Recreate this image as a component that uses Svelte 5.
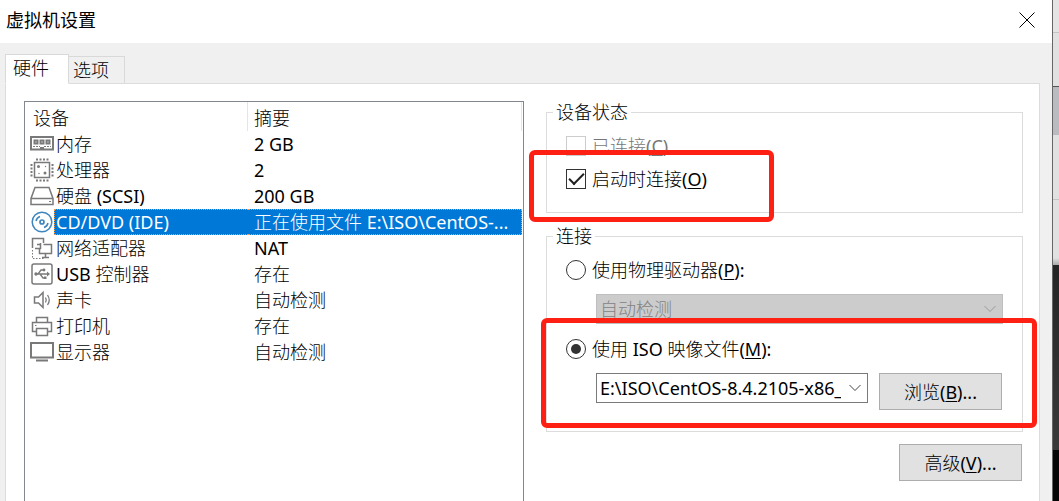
<script>
	let devices = [
		{ icon: 'memory', name: '内存', summary: '2 GB' },
		{ icon: 'cpu', name: '处理器', summary: '2' },
		{ icon: 'disk', name: '硬盘 (SCSI)', summary: '200 GB' },
		{ icon: 'cd', name: 'CD/DVD (IDE)', summary: '正在使用文件 E:\\ISO\\CentOS-...' },
		{ icon: 'network', name: '网络适配器', summary: 'NAT' },
		{ icon: 'usb', name: 'USB 控制器', summary: '存在' },
		{ icon: 'sound', name: '声卡', summary: '自动检测' },
		{ icon: 'printer', name: '打印机', summary: '存在' },
		{ icon: 'display', name: '显示器', summary: '自动检测' }
	]

	let selected = $state(3)
	let connected = $state(false)
	let connectAtPowerOn = $state(true)
	let source = $state('iso')

	// latin runs are set heavier than the thin chinese face
	function runs(text) {
		return text.split(/([ -~]+)/).filter((t) => t !== '')
	}
</script>

{#snippet mixed(text)}{#each runs(text) as t}<span class:latin={/^[ -~]/.test(t)}>{t}</span>{/each}{/snippet}

{#snippet key(letter, tail = '')}<span class="latin">(<u>{letter}</u>){tail}</span>{/snippet}

{#snippet icon(name)}
	<svg class="icon" class:blue={name === 'cd'} viewBox="0 0 24 24" aria-hidden="true">
		{#if name === 'memory'}
			<path d="M1 5H23V17.500H13V16H11V17.500H1Z" stroke-width="2" />
			<path d="M4.500 8.500h3v3h-3zM10.500 8.500h3v3h-3zM16.500 8.500h3v3h-3z" stroke-width="2" />
			<path d="M3 14.500H10M14 14.500H21" stroke-dasharray="2 1" />
		{:else if name === 'cpu'}
			<rect x="4.500" y="4.500" width="15" height="15" stroke-width="1.500" />
			<path d="M6 1.500H19M6 22.500H19" stroke-width="2" stroke-dasharray="2 1.500" />
			<path d="M1.500 6V19M22.500 6V19" stroke-width="2" stroke-dasharray="2 1.500" />
			<circle class="fill" cx="8.500" cy="8.500" r="1.500" />
			<circle class="fill" cx="15" cy="15" r="1.500" />
			<circle class="fill" cx="9" cy="15.500" r="0.700" />
			<circle class="fill" cx="15.500" cy="8.500" r="0.700" />
		{:else if name === 'disk'}
			<path d="M5 3.500H19L23 14.500V20.500H1V14.500ZM1 14.500H23" stroke-width="1.500" />
			<path d="M19 17.500h2" />
		{:else if name === 'cd'}
			<circle cx="12" cy="12" r="9.800" stroke-width="1.500" />
			<circle cx="12" cy="12" r="2" stroke-width="1.700" />
			<path d="M6 11A6 6 0 0 1 10 6.500M18 13A6 6 0 0 1 14 17.500" stroke-width="1.500" />
		{:else if name === 'network'}
			<path d="M2.500 12V2.500H13.500V7" stroke-width="1.500" />
			<path d="M13.500 8.500H21.500V17.500H9.500V12" stroke-width="1.500" />
			<path d="M5 12.500H10.500V7M7 8.500H10.500" stroke-width="1.500" />
			<path d="M15.500 18V21M12 21.500H19" stroke-width="1.500" />
			<path d="M2.500 14V22M3 22.500H14" stroke-dasharray="1.500 1.500" />
		{:else if name === 'usb'}
			<rect x="2" y="2" width="20" height="20" rx="2" stroke-width="1.500" />
			<path d="M5 12H18M8 12 11 8H14M10 12 13 16H15" stroke-width="1.300" />
			<path class="fill" d="M17 9.500 20 12 17 14.500Z" />
			<circle class="fill" cx="6" cy="12" r="1.700" />
			<circle class="fill" cx="14" cy="8" r="1.400" />
			<path class="fill" d="M14 14.500h2.500v2.500h-2.500z" />
		{:else if name === 'sound'}
			<path d="M4.500 9H8.500L13 4.500V19.500L8.500 15H4.500Z" stroke-width="1.500" />
			<path d="M15.500 9.500Q17 12 15.500 14.500M17.500 7Q21 12 17.500 17" stroke-width="1.300" />
		{:else if name === 'printer'}
			<path d="M6.500 8V3.500H17.500V8M6.500 17.500H2.500V8.500H21.500V17.500H17.500M6.500 14.500H17.500V21.500H6.500Z" stroke-width="1.500" />
			<path d="M5 11.500h1.500" />
		{:else}
			<path d="M1 3H23V17.500H1Z" stroke-width="2" />
			<path d="M6 20.500H18" stroke-width="2" />
		{/if}
	</svg>
{/snippet}

<div class="screen">
	<main class="dialog">
		<header>
			<h1>虚拟机设置</h1>
			<button class="close" aria-label="关闭">
				<svg viewBox="0 0 16 16"><path d="M.5.5 15.500 15.500M15.500.5.5 15.500" /></svg>
			</button>
		</header>

		<div class="body">
			<div class="tabs" role="tablist">
				<button class="tab active" role="tab" aria-selected="true">硬件</button>
				<button class="tab" role="tab" aria-selected="false">选项</button>
			</div>

			<div class="panel" role="tabpanel">
				<div class="list">
					<table>
						<colgroup>
							<col class="c-icon" />
							<col class="c-name" />
							<col />
						</colgroup>
						<thead>
							<tr>
								<th colspan="2">设备</th>
								<th>摘要</th>
							</tr>
						</thead>
						<tbody>
							{#each devices as d, i}
								<tr class:selected={selected === i} onclick={() => (selected = i)}>
									<td class="pic">{@render icon(d.icon)}</td>
									<td class="name">{@render mixed(d.name)}</td>
									<td class="summary">{@render mixed(d.summary)}</td>
								</tr>
							{/each}
						</tbody>
					</table>
				</div>

				<div class="settings">
					<fieldset class="status">
						<legend>设备状态</legend>
						<label class="row disabled">
							<input type="checkbox" bind:checked={connected} disabled />
							<span>已连接{@render key('C')}</span>
						</label>
						<label class="row">
							<input type="checkbox" bind:checked={connectAtPowerOn} />
							<span>启动时连接{@render key('O')}</span>
						</label>
						<div class="mark mark-status"></div>
					</fieldset>

					<fieldset class="connection">
						<legend>连接</legend>
						<label class="row">
							<input type="radio" name="source" value="physical" bind:group={source} />
							<span>使用物理驱动器{@render key('P', ':')}</span>
						</label>
						<div class="combo off">
							<select aria-label="物理驱动器" disabled>
								<option>自动检测</option>
							</select>
							<svg viewBox="0 0 12 8"><path d="M.5 1 6 6.500 11.500 1" /></svg>
						</div>
						<label class="row second">
							<input type="radio" name="source" value="iso" bind:group={source} />
							<span>{@render mixed('使用 ISO 映像文件')}{@render key('M', ':')}</span>
						</label>
						<div class="file">
							<div class="combo">
								<select class="latin" aria-label="ISO 映像文件">
									<option>E:\ISO\CentOS-8.4.2105-x86_</option>
								</select>
								<svg viewBox="0 0 12 8"><path d="M.5 1 6 6.500 11.500 1" /></svg>
							</div>
							<button class="push">浏览{@render key('B', '...')}</button>
						</div>
						<div class="mark mark-iso"></div>
					</fieldset>

					<button class="push advanced">高级{@render key('V', '...')}</button>
				</div>
			</div>
		</div>
	</main>
	<div class="backdrop"></div>
</div>

<style>
	:global(body) {
		margin: 0;
		overflow: hidden;
	}

	.screen, .screen * {
		box-sizing: border-box;
	}

	.screen {
		display: flex;
		height: 100vh;
		font: 300 18px/24px "Noto Sans", "Noto Sans CJK SC", sans-serif;
		color: #000;
	}

	button, select {
		font: inherit;
		color: inherit;
	}

	.latin {
		font-weight: 400;
	}

	.dialog {
		flex: 1;
		min-width: 0;
		display: flex;
		flex-direction: column;
		background: #f0f0f0;
	}

	header {
		display: flex;
		align-items: center;
		justify-content: space-between;
		height: 43px;
		padding: 0 17px 3px 6px;
		background: #fff;
	}

	h1 {
		margin: 0;
		font-size: 18px;
		font-weight: 400;
	}

	.close {
		display: flex;
		padding: 0;
		border: 0;
		background: none;
	}

	.close svg {
		width: 16px;
		height: 16px;
		fill: none;
		stroke: #000;
	}

	.body {
		flex: 1;
		display: flex;
		flex-direction: column;
		min-height: 0;
		padding: 11px 12px 0 5px;
	}

	.tabs {
		display: flex;
		align-items: flex-end;
		height: 30px;
	}

	.tab {
		height: 28px;
		padding: 0 15px 0 4px;
		border: 1px solid #d9d9d9;
		border-left: 0;
		background: #f0f0f0;
	}

	/* the white tab hides the panel's top line */
	.tab.active {
		position: relative;
		z-index: 1;
		height: 30px;
		padding: 0 19px 2px 7px;
		border-left: 1px solid #d9d9d9;
		border-bottom-color: #fff;
		background: #fff;
	}

	.panel {
		flex: 1;
		min-height: 0;
		display: grid;
		grid-template-columns: 500fr 477fr;
		gap: 22px;
		margin-top: -1px;
		padding: 17px 16px 0 18px;
		border: 1px solid #dcdcdc;
		border-bottom: 0;
		background: #fff;
	}

	.list {
		min-width: 0;
		border: 1px solid #828790;
		border-bottom: 0;
		padding-right: 1px;
	}

	table {
		width: 100%;
		table-layout: fixed;
		border-collapse: separate;
		border-spacing: 0;
	}

	.c-icon {
		width: 29px;
	}

	.c-name {
		width: 194px;
	}

	th {
		height: 29px;
		padding: 2px 0 0 8px;
		border-right: 1px solid #e5e5e5;
		font-weight: inherit;
		text-align: left;
	}

	th + th {
		padding-left: 6px;
	}

	td {
		height: 26px;
		padding: 0;
		border: 0 dotted transparent;
		border-width: 1px 0;
		overflow: hidden;
		white-space: nowrap;
	}

	.pic {
		padding-left: 5px;
		border: 0;
	}

	.name {
		padding-left: 1px;
		border-left-width: 1px;
	}

	.summary {
		padding-left: 6px;
		border-right-width: 1px;
	}

	.selected .name,
	.selected .summary {
		color: #fff;
		background: #0078d7;
		border-color: #ff9a3c;
	}

	.icon {
		display: block;
		width: 24px;
		height: 24px;
		fill: none;
		stroke: #797979;
	}

	.icon .fill {
		fill: #797979;
		stroke: none;
	}

	.icon.blue {
		stroke: #3e86be;
	}

	.settings {
		min-width: 0;
		display: flex;
		flex-direction: column;
	}

	fieldset {
		position: relative;
		min-width: 0;
		margin: 0;
		padding: 5px 19px 0;
		border: 1px solid #dcdcdc;
	}

	legend {
		margin-left: -13px;
		padding: 0 3px;
		line-height: 23px;
	}

	.status {
		padding-bottom: 17px;
	}

	.connection {
		margin-top: 12px;
		padding-bottom: 21px;
	}

	.row {
		display: flex;
		align-items: center;
		gap: 6px;
		height: 33px;
	}

	.second {
		margin-top: 8px;
	}

	.disabled {
		color: #777;
	}

	input {
		display: grid;
		place-items: center;
		flex: none;
		width: 20px;
		height: 20px;
		margin: 0;
		appearance: none;
		border: 1px solid #333;
		background: #fff;
	}

	input:disabled {
		border-color: #ccc;
	}

	input[type="checkbox"]:checked::before {
		content: "";
		width: 13px;
		height: 6px;
		margin-bottom: 4px;
		border: solid #222;
		border-width: 0 0 2px 2px;
		transform: rotate(-45deg);
	}

	input[type="radio"] {
		border-radius: 50%;
	}

	input[type="radio"]:checked::before {
		content: "";
		width: 10px;
		height: 10px;
		border-radius: 50%;
		background: #333;
	}

	u {
		text-decoration-thickness: 1px;
		text-underline-offset: 2px;
	}

	.combo {
		position: relative;
		flex: 1;
		min-width: 0;
		height: 30px;
	}

	.combo.off {
		margin: 8px 0 0 30px;
	}

	select {
		display: block;
		width: 100%;
		height: 100%;
		padding: 0 26px 0 3px;
		appearance: none;
		border: 1px solid #7a7a7a;
		border-radius: 0;
		background: #fff;
	}

	select:disabled {
		color: #838383;
		opacity: 1;
		border-color: #bfbfbf;
		background: #ccc;
	}

	.combo svg {
		position: absolute;
		top: 11px;
		right: 7px;
		width: 12px;
		height: 8px;
		fill: none;
		stroke: #444;
		pointer-events: none;
	}

	.off svg {
		stroke: #999;
	}

	.file {
		display: flex;
		gap: 11px;
		margin: 8px 0 0 30px;
	}

	.push {
		width: 123px;
		height: 37px;
		margin-right: 1px;
		padding: 0;
		border: 1px solid #adadad;
		background: #e1e1e1;
	}

	.advanced {
		align-self: flex-end;
		margin-top: 12px;
	}

	.mark {
		position: absolute;
		z-index: 2;
		border: 5px solid #ff2014;
		border-radius: 6px;
		pointer-events: none;
	}

	.mark-status {
		top: 26px;
		left: -18px;
		width: 245px;
		height: 72px;
	}

	.mark-iso {
		top: 70px;
		right: -15px;
		left: -6px;
		height: 110px;
	}

	.backdrop {
		flex: none;
		width: 7px;
		border-left: 1px solid #666;
		background: linear-gradient(
			#e4e4e4 32px, #c4c4c4 32px 33px, #e1e1e1 33px 86px,
			#555 86px 87px, #b9bbc0 87px 135px, #e1e1e1 135px 199px,
			#c4c4c4 199px 200px, #e1e1e1 200px 258px, #aaa 265px,
			#252525 265px, #3a3a3a 450px, #050505 450px
		);
	}
</style>
